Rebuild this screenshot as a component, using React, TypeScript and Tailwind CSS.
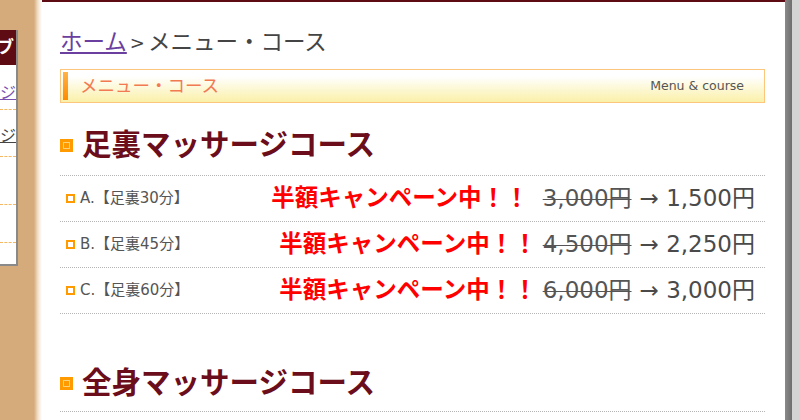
import React from "react";

const font = { fontFamily: '"DejaVu Sans", "Noto Sans CJK JP", sans-serif' };

interface Course {
  label: string;
  campaign: string;
  before: string;
  after: string;
}

const courses: Course[] = [
  { label: "A.【足裏30分】", campaign: "半額キャンペーン中！！ ", before: "3,000円", after: "1,500円" },
  { label: "B.【足裏45分】", campaign: "半額キャンペーン中！！", before: "4,500円", after: "2,250円" },
  { label: "C.【足裏60分】", campaign: "半額キャンペーン中！！", before: "6,000円", after: "3,000円" },
];

const BigMark = () => (
  <span className="flex h-[13px] w-[13px] shrink-0 items-center justify-center bg-[#ff9a00]">
    <span className="h-[7px] w-[7px] border border-[#ffd27a]" />
  </span>
);

const SmallMark = () => (
  <span className="h-[9px] w-[9px] shrink-0 border-2 border-[#ff9a00] bg-white" />
);

const Sidebar = () => (
  <div className="flex w-[42px] shrink-0 bg-[linear-gradient(to_right,#d6ab7c_0px,#d6ab7c_34px,#f3e2cc_38px,#ffffff_42px)]">
    <div className="mt-[30px] flex h-[236px] w-[18px] flex-col overflow-hidden border-r-2 border-b-2 border-[#8a8a8a] bg-white">
      <div className="flex h-[35px] items-center justify-end whitespace-nowrap bg-[#5e0b14] pr-[2px] text-[17px] font-bold text-white">
        メニューブ
      </div>
      <div className="flex h-[45px] items-center justify-end whitespace-nowrap border-b border-dashed border-[#f5b860] pt-[12px] text-[16px] text-[#7a4fb0] underline">
        ページ
      </div>
      <div className="flex h-[47px] items-center justify-end whitespace-nowrap border-b border-dashed border-[#f5b860] pt-[6px] text-[16px] text-[#444] underline">
        ページ
      </div>
      <div className="h-[48px] border-b border-dashed border-[#f5b860]" />
      <div className="h-[38px] border-b border-dashed border-[#f5b860]" />
    </div>
  </div>
);

const CourseRow = ({ course }: { course: Course }) => (
  <div className="flex h-[46px] items-center border-b border-dotted border-[#b5b5b5] pl-[6px] pr-[10px]">
    <SmallMark />
    <span className="ml-[5px] text-[15px] text-[#555]">{course.label}</span>
    <span className="ml-auto whitespace-pre text-[23.5px] font-bold text-[#ff0000]">{course.campaign}</span>
    <span className="ml-[6px] text-[23px] text-[#555] line-through decoration-1">{course.before}</span>
    <span className="ml-[8px] text-[23px] text-[#4a4a4a]">→ {course.after}</span>
  </div>
);

const App: React.FC = () => {
  return (
    <div className="flex h-[420px] w-[800px] overflow-hidden bg-white" style={font}>
      <Sidebar />
      <div className="flex w-[743px] shrink-0 flex-col border-t-2 border-[#5e0b14] pl-[18px] pr-[20px]">
        <div className="mt-[24px] flex h-[33px] items-center text-[22.5px] text-[#444]">
          <span className="text-[#6a3fa0] underline underline-offset-2">ホーム</span>
          <span className="mx-[3px] text-[18px]">&gt;</span>
          <span>メニュー・コース</span>
        </div>

        <div className="mt-[10px] flex h-[34px] items-center border border-[#fcc77c] bg-[linear-gradient(to_bottom,#ffffff_20%,#faf0a8_100%)] py-[2px] pl-[2px] pr-[20px]">
          <span className="h-full w-[5px] bg-[linear-gradient(to_bottom,#ffb347,#ff8a00)]" />
          <span className="ml-[12px] text-[17.5px] text-[#f27a52]">メニュー・コース</span>
          <span className="ml-auto text-[12.5px] text-[#555]">Menu &amp; course</span>
        </div>

        <div className="mt-[22px] flex h-[40px] items-center gap-[9px]">
          <BigMark />
          <h2 className="text-[29.5px] font-bold text-[#6b0d1a]">足裏マッサージコース</h2>
        </div>
        <div className="mt-[10px] border-t border-dotted border-[#b5b5b5]">
          {courses.map((c) => (
            <CourseRow key={c.label} course={c} />
          ))}
        </div>

        <div className="mt-[49px] flex h-[40px] items-center gap-[9px]">
          <BigMark />
          <h2 className="text-[29.5px] font-bold text-[#6b0d1a]">全身マッサージコース</h2>
        </div>
        <div className="mt-[8px] border-t border-dotted border-[#b5b5b5]" />
      </div>
      <div className="w-[7px] shrink-0 bg-[linear-gradient(to_right,#8a8a8a,#6e6e6e)]" />
      <div className="flex-1 bg-[#d4d4d4]" />
    </div>
  );
};

export default App;
